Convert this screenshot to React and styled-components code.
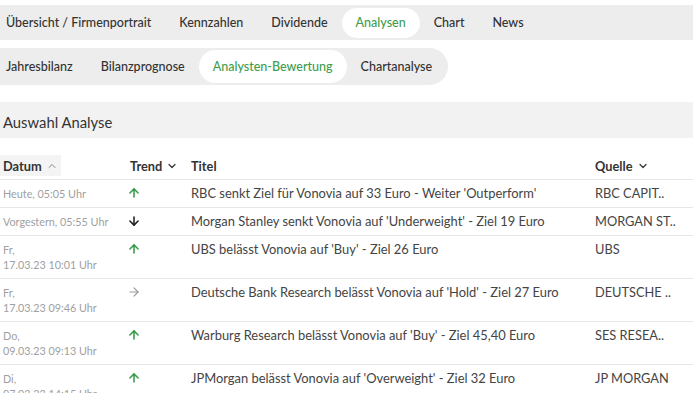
import React from 'react';
import styled, { createGlobalStyle } from 'styled-components';
import { ArrowUp, ArrowDown, ArrowRight, ChevronDown, ChevronUp } from 'lucide-react';

const GlobalStyle = createGlobalStyle`
  body {
    margin: 0;
    background: #fff;
    font-family: Lato, "Open Sans", "Liberation Sans", sans-serif;
    color: #333;
  }
`;

const Page = styled.div`
  width: 693px;
  overflow: hidden;
  padding-top: 5px;
`;

const TabBar = styled.nav`
  display: flex;
  align-items: center;
  background: #ededed;
  height: 35px;
  padding: 0 2px;
  box-sizing: border-box;
`;

const SubBar = styled(TabBar)`
  display: inline-flex;
  height: 37px;
  margin-top: 8px;
  border-radius: 0 19px 19px 0;
`;

const Tab = styled.div`
  height: ${p => (p.sub ? '33px' : '30px')};
  display: flex;
  align-items: center;
  padding: 0 14px;
  border-radius: 17px;
  font-size: 12.5px;
  font-weight: 500;
  white-space: nowrap;
  color: ${p => (p.active ? '#3f9d4f' : '#333')};
  background: ${p => (p.active ? '#fff' : 'transparent')};
  &:first-child {
    padding-left: 4px;
  }
`;

const SectionHead = styled.div`
  margin-top: 17px;
  height: 36px;
  background: #f2f2f2;
  display: flex;
  align-items: center;
  padding: 3px 0 0 3px;
  box-sizing: border-box;
  font-size: 14.8px;
  color: #333;
`;

const Table = styled.div`
  margin-top: 17px;
`;

const Row = styled.div`
  display: grid;
  grid-template-columns: 127px 61px 404px 1fr;
  border-bottom: 1px solid #e6e6e6;
  min-height: ${p => (p.tall ? '42px' : '27px')};
  align-items: start;
`;

const HeadRow = styled(Row)`
  min-height: 24px;
  align-items: end;
`;

const HeadCell = styled.div`
  display: flex;
  align-items: center;
  gap: 4px;
  font-size: 12.8px;
  font-weight: 700;
  color: #333;
  height: 21px;
  padding: 0 3px;
  margin-bottom: 3px;
  justify-self: start;
  background: ${p => (p.sorted ? '#f4f4f4' : 'transparent')};
`;

const DateCell = styled.div`
  font-size: 10.8px;
  color: #a0a0a0;
  padding: 6px 0 0 3px;
  line-height: 15px;
`;

const TrendCell = styled.div`
  padding: 6px 0 0 0;
  display: flex;
`;

const TitleCell = styled.div`
  font-size: 12.9px;
  color: #444;
  padding: 5px 0 0 3px;
  line-height: 17px;
  white-space: nowrap;
`;

const SourceCell = styled(TitleCell)`
  font-size: 12.8px;
`;

const trendIcon = {
  up: <ArrowUp size={14} strokeWidth={2.7} color="#3a9d4d" />,
  down: <ArrowDown size={14} strokeWidth={2.7} color="#222" />,
  flat: <ArrowRight size={14} strokeWidth={2} color="#999" />,
};

const rows = [
  { date: ['Heute, 05:05 Uhr'], trend: 'up', title: "RBC senkt Ziel für Vonovia auf 33 Euro - Weiter 'Outperform'", source: 'RBC CAPIT..' },
  { date: ['Vorgestern, 05:55 Uhr'], trend: 'down', title: "Morgan Stanley senkt Vonovia auf 'Underweight' - Ziel 19 Euro", source: 'MORGAN ST..' },
  { date: ['Fr,', '17.03.23 10:01 Uhr'], trend: 'up', title: "UBS belässt Vonovia auf 'Buy' - Ziel 26 Euro", source: 'UBS' },
  { date: ['Fr,', '17.03.23 09:46 Uhr'], trend: 'flat', title: "Deutsche Bank Research belässt Vonovia auf 'Hold' - Ziel 27 Euro", source: 'DEUTSCHE ..' },
  { date: ['Do,', '09.03.23 09:13 Uhr'], trend: 'up', title: "Warburg Research belässt Vonovia auf 'Buy' - Ziel 45,40 Euro", source: 'SES RESEA..' },
  { date: ['Di,', '07.03.23 14:15 Uhr'], trend: 'up', title: "JPMorgan belässt Vonovia auf 'Overweight' - Ziel 32 Euro", source: 'JP MORGAN' },
];

export default function App() {
  return (
    <Page>
      <GlobalStyle />
      <TabBar>
        <Tab>Übersicht / Firmenportrait</Tab>
        <Tab>Kennzahlen</Tab>
        <Tab>Dividende</Tab>
        <Tab active>Analysen</Tab>
        <Tab>Chart</Tab>
        <Tab>News</Tab>
      </TabBar>
      <SubBar>
        <Tab sub>Jahresbilanz</Tab>
        <Tab sub>Bilanzprognose</Tab>
        <Tab sub active>Analysten-Bewertung</Tab>
        <Tab sub>Chartanalyse</Tab>
      </SubBar>
      <SectionHead>Auswahl Analyse</SectionHead>
      <Table>
        <HeadRow>
          <HeadCell sorted>Datum <ChevronUp size={12} strokeWidth={2} color="#888" /></HeadCell>
          <HeadCell>Trend <ChevronDown size={12} strokeWidth={2.4} /></HeadCell>
          <HeadCell>Titel</HeadCell>
          <HeadCell>Quelle <ChevronDown size={12} strokeWidth={2.4} /></HeadCell>
        </HeadRow>
        {rows.map((r, i) => (
          <Row key={i} tall={r.date.length > 1}>
            <DateCell>
              {r.date.map((d, j) => (
                <div key={j}>{d}</div>
              ))}
            </DateCell>
            <TrendCell>{trendIcon[r.trend]}</TrendCell>
            <TitleCell>{r.title}</TitleCell>
            <SourceCell>{r.source}</SourceCell>
          </Row>
        ))}
      </Table>
    </Page>
  );
}
